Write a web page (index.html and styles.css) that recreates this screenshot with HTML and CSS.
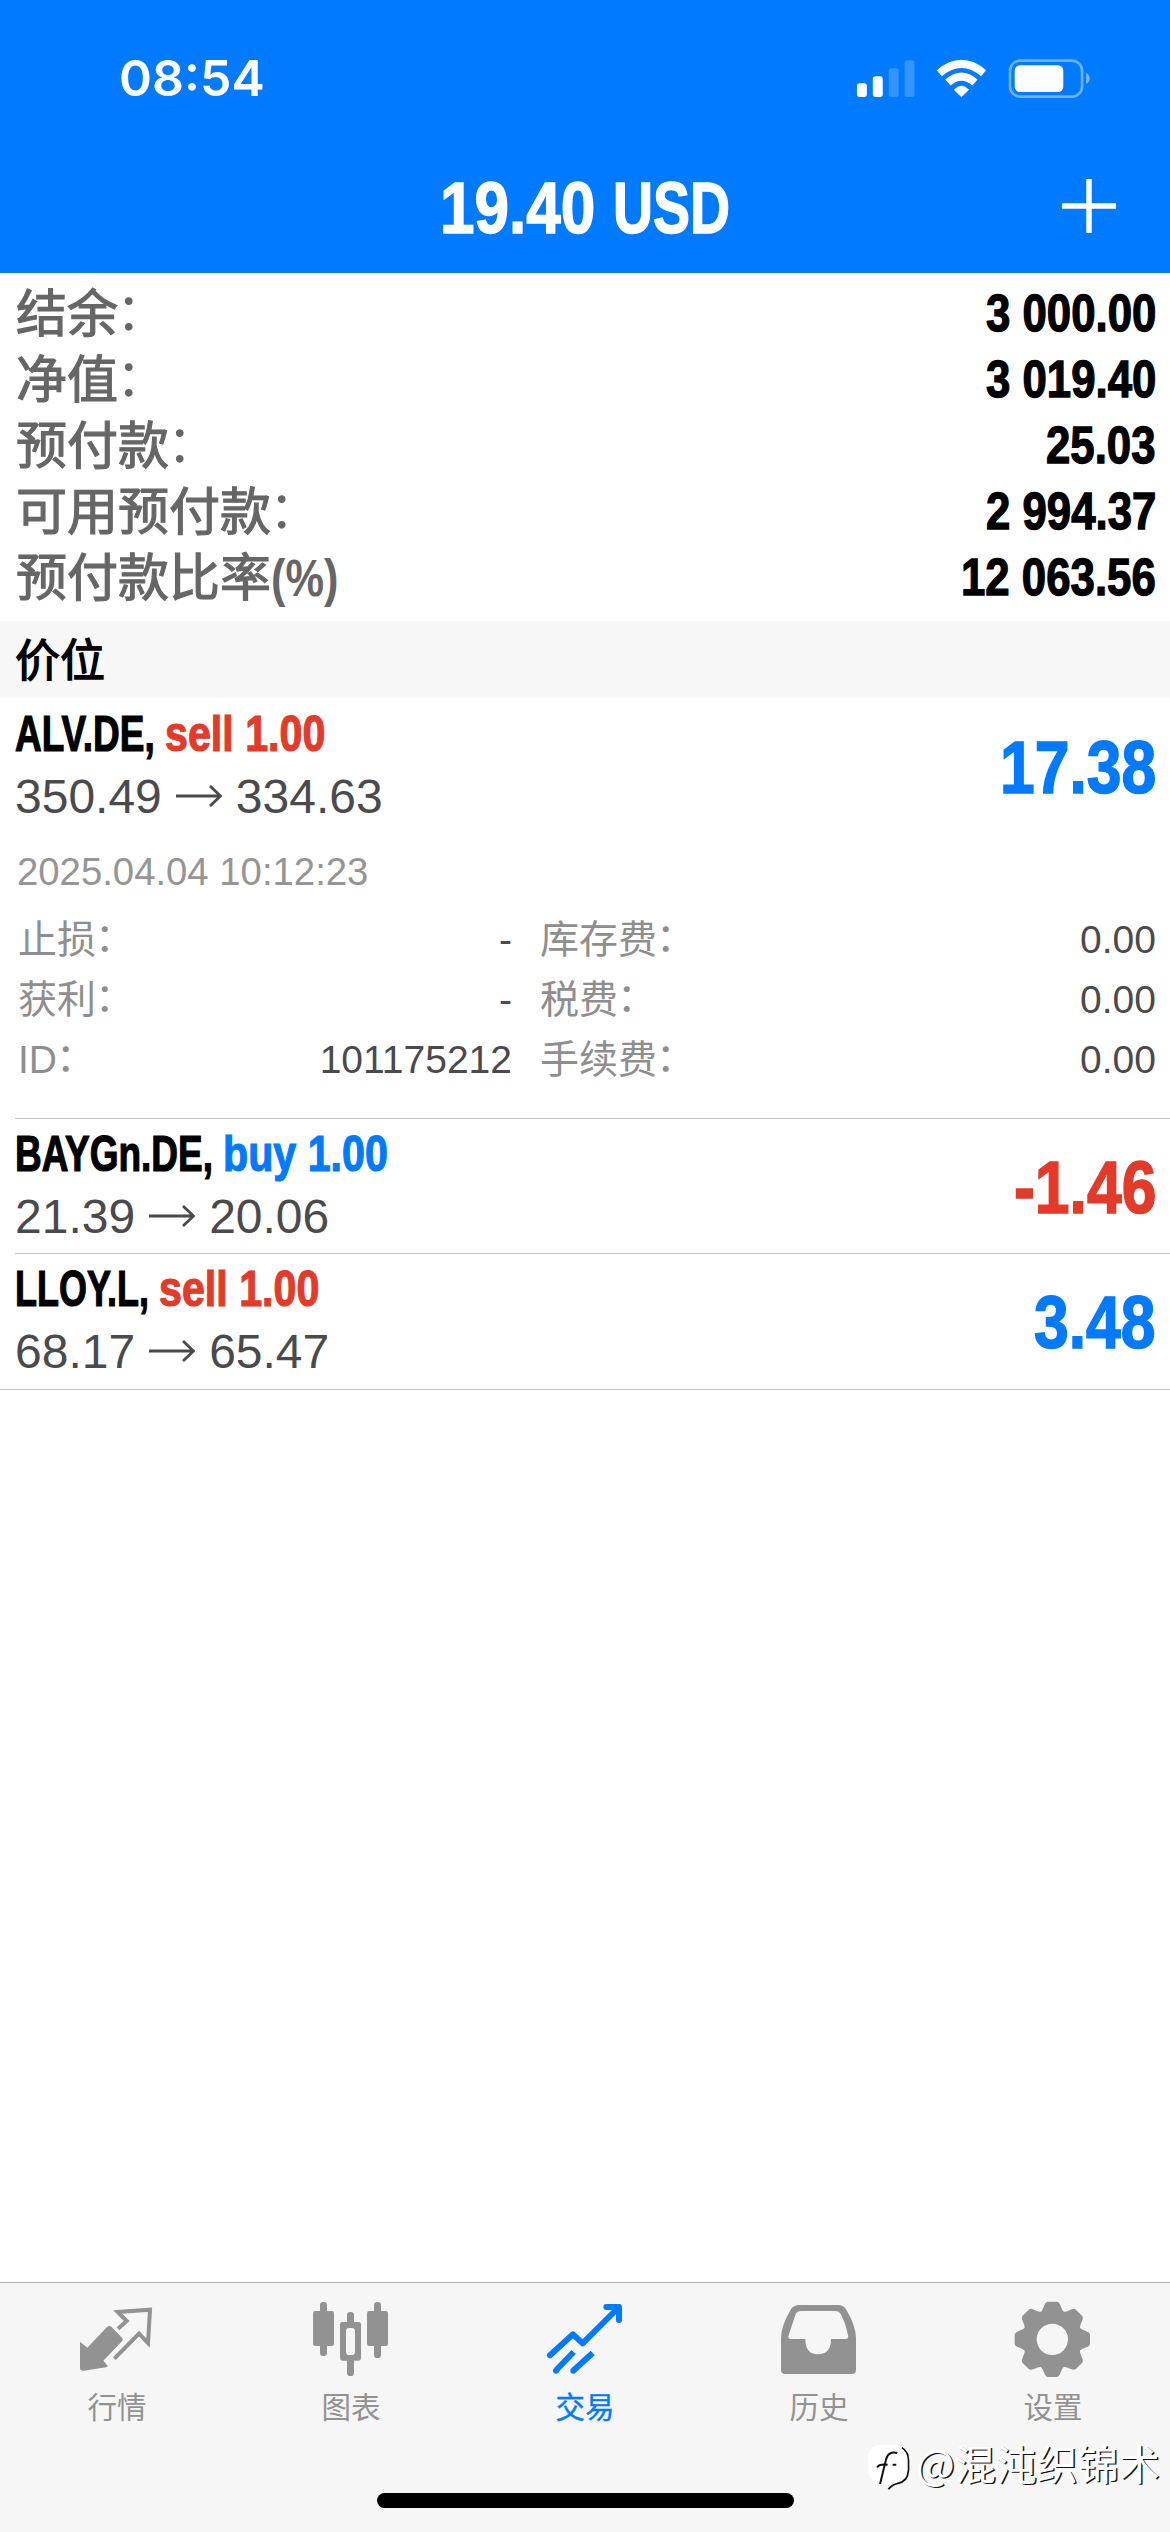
FILE: index.html
```
<!DOCTYPE html>
<html lang="zh-CN">
<head>
<meta charset="utf-8">
<title>交易</title>
<link rel="stylesheet" href="styles.css">
</head>
<body>
<div class="app">
  <header class="header">
    <div class="status">
      <span class="time">08:54</span>
      <svg class="status-icons" viewBox="48 50 708 124">
        <g fill="#fff">
          <rect x="48" y="126" width="30" height="42" rx="8"/>
          <rect x="96" y="105" width="30" height="63" rx="8"/>
          <rect x="144" y="81" width="30" height="87" rx="8" opacity=".2"/>
          <rect x="192" y="57" width="30" height="111" rx="8" opacity=".2"/>
          <path d="M364 167L342 146Q364 124 386 146Z" stroke="#fff" stroke-width="2" stroke-linejoin="round"/>
          <rect x="525" y="72" width="147" height="81" rx="16"/>
          <path d="M741 95Q752 101 752 112Q752 123 741 129Z" opacity=".45"/>
        </g>
        <g fill="none" stroke="#fff" stroke-width="24">
          <path d="M323 124Q364 88 405 124"/>
          <path d="M297 96Q364 40 431 96"/>
        </g>
        <rect x="511" y="58" width="218" height="109" rx="31" fill="none" stroke="#fff" stroke-width="8" opacity=".42"/>
      </svg>
    </div>
    <div class="nav">
      <h1 class="title"><span class="squeeze num">19.40</span><span class="squeeze usd">USD</span></h1>
      <svg class="plus" viewBox="0 0 54 54"><path d="M27 0V54M0 27H54" stroke="#fff" stroke-width="5.5"/></svg>
    </div>
  </header>

  <dl class="summary">
    <div><dt>结余<i>：</i></dt><dd><span class="squeeze num">3 000.00</span></dd></div>
    <div><dt>净值<i>：</i></dt><dd><span class="squeeze num">3 019.40</span></dd></div>
    <div><dt>预付款<i>：</i></dt><dd><span class="squeeze num">25.03</span></dd></div>
    <div><dt>可用预付款<i>：</i></dt><dd><span class="squeeze num">2 994.37</span></dd></div>
    <div><dt>预付款比率<span class="squeeze pct">(%)</span></dt><dd><span class="squeeze num">12 063.56</span></dd></div>
  </dl>

  <h2 class="band">价位</h2>

  <main class="positions">
    <section class="position">
      <div class="head">
        <div>
          <div class="name"><span class="squeeze sym">ALV.DE,</span><span class="squeeze side red">sell 1.00</span></div>
          <div class="price">350.49<svg class="arrow" viewBox="0 0 46 22"><path d="M0 11H44M34 1L44.500 11L34 21"/></svg>334.63</div>
        </div>
        <div class="profit blue"><span class="squeeze num">17.38</span></div>
      </div>
      <div class="date">2025.04.04 10:12:23</div>
      <div class="details">
        <span>止损<i>：</i></span><b>-</b><span>库存费<i>：</i></span><b>0.00</b>
        <span>获利<i>：</i></span><b>-</b><span>税费<i>：</i></span><b>0.00</b>
        <span>ID<i>：</i></span><b>101175212</b><span>手续费<i>：</i></span><b>0.00</b>
      </div>
    </section>
    <section class="position">
      <div class="head">
        <div>
          <div class="name"><span class="squeeze sym">BAYGn.DE,</span><span class="squeeze side blue">buy 1.00</span></div>
          <div class="price">21.39<svg class="arrow" viewBox="0 0 46 22"><path d="M0 11H44M34 1L44.500 11L34 21"/></svg>20.06</div>
        </div>
        <div class="profit red"><span class="squeeze num">-1.46</span></div>
      </div>
    </section>
    <section class="position">
      <div class="head">
        <div>
          <div class="name"><span class="squeeze sym tight">LLOY.L,</span><span class="squeeze side red">sell 1.00</span></div>
          <div class="price">68.17<svg class="arrow" viewBox="0 0 46 22"><path d="M0 11H44M34 1L44.500 11L34 21"/></svg>65.47</div>
        </div>
        <div class="profit blue"><span class="squeeze num">3.48</span></div>
      </div>
    </section>
  </main>

  <footer class="tabbar">
    <nav class="tabs">
      <a class="tab">
        <svg viewBox="231 90 240 240">
          <path d="M240 215L262 233L321 171Q328 165 335 171L366 203Q371 208 366 214L310 272L323 287Q323 291 318 292L252 302Q240 303 240 294Z" fill="currentColor"/>
          <path d="M354 176L380 153L353 126L450 119L444 219L417 191L343 266" fill="none" stroke="currentColor" stroke-width="12" stroke-linejoin="miter"/>
        </svg>
        行情
      </a>
      <a class="tab">
        <svg viewBox="933 90 240 240" fill="currentColor">
          <rect x="939" y="123" width="63" height="105" rx="7"/>
          <rect x="960" y="96" width="21" height="162" rx="10"/>
          <rect x="1041" y="126" width="21" height="50" rx="10"/>
          <rect x="1041" y="255" width="21" height="63" rx="10"/>
          <path d="M1040 174H1064V255H1040Z" fill="#f6f6f6"/>
          <path fill-rule="evenodd" d="M1027 156H1076Q1083 156 1083 163V265Q1083 272 1076 272H1027Q1020 272 1020 265V163Q1020 156 1027 156ZM1048 174Q1038 174 1038 184V245Q1038 255 1048 255H1055Q1065 255 1065 245V184Q1065 174 1055 174Z"/>
          <rect x="1101" y="123" width="63" height="105" rx="7"/>
          <rect x="1122" y="96" width="21" height="168" rx="10"/>
        </svg>
        图表
      </a>
      <a class="tab active">
        <svg viewBox="375 90 240 240" fill="none" stroke="currentColor" stroke-width="18" stroke-linejoin="round">
          <path d="M390 256L459 193L488 220L594 114M559 111H597V150" stroke-linecap="round"/>
          <path d="M409 300L461 246M462 300L518 249"/>
          <g fill="currentColor" stroke="none"><circle cx="408" cy="302" r="9"/><circle cx="460" cy="302" r="9"/></g>
        </svg>
        交易
      </a>
      <a class="tab">
        <svg viewBox="-48 90 240 240" fill="currentColor">
          <path fill-rule="evenodd" d="M14 105H128Q146 105 154 119Q183 168 183 205V299Q183 312 170 312H-29Q-42 312 -42 299V205Q-42 168 -13 119Q-5 105 14 105ZM19 123Q6 123 2 132L-19 196Q-23 207 -13 207H31Q31 253 69 253Q108 253 108 207H152Q162 207 159 196Q152 160 137 132Q132 123 121 123Z"/>
        </svg>
        历史
      </a>
      <a class="tab">
        <svg viewBox="-118 -118 240 240" fill="currentColor">
          <defs><path id="tooth" d="M-36 -80Q-29 -87 -24 -102Q-20 -113 -13 -113H13Q20 -113 24 -102Q29 -87 36 -80Z"/></defs>
          <circle r="68" fill="none" stroke="currentColor" stroke-width="42"/>
          <use href="#tooth"/>
          <use href="#tooth" transform="rotate(45)"/>
          <use href="#tooth" transform="rotate(90)"/>
          <use href="#tooth" transform="rotate(135)"/>
          <use href="#tooth" transform="rotate(180)"/>
          <use href="#tooth" transform="rotate(225)"/>
          <use href="#tooth" transform="rotate(270)"/>
          <use href="#tooth" transform="rotate(315)"/>
        </svg>
        设置
      </a>
    </nav>
    <div class="home"></div>
    <div class="credit">
      <svg viewBox="210 526 135 145">
        <path d="M255 532H300Q340 532 340 575V610Q338 645 305 651L278 664L285 652Q216 655 216 600V572Q218 532 255 532Z" fill="#fff"/>
        <path d="M318 540Q338 552 338 580V608Q336 642 306 648Q288 652 277 666" fill="none" stroke="#111" stroke-width="5"/>
        <path d="M304 556Q276 548 269 580L252 650M243 600Q250 588 275 592M290 592H301" fill="none" stroke="#111" stroke-width="6"/>
      </svg>
      <span>@混沌织锦术</span>
    </div>
  </footer>
</div>
<script src="squeeze.js"></script>
</body>
</html>
```
FILE: styles.css
```
* { box-sizing: border-box; }
body {
  margin: 0;
  background: #fff;
  color: #000;
  font-family: "Liberation Sans", "Noto Sans CJK SC", sans-serif;
}
i { font-style: normal; }
.app {
  width: 1170px;
  height: 2532px;
  display: flex;
  flex-direction: column;
  overflow: hidden;
}

/* Text narrowed horizontally; --k is the width factor */
.squeeze {
  display: inline-block;
  white-space: pre;
  transform-origin: 0 50%;
}
.num { --k: .85; }
.usd { --k: .76; margin-left: 17px; }
.sym { --k: .747; }
.sym.tight { --k: .727; }
.side { --k: .832; margin-left: 10px; }
.pct { --k: .85; font-weight: 700; -webkit-text-stroke: 0; }
.red { color: #e33a2a; }
.blue { color: #007aff; }

.header {
  height: 273px;
  background: #007aff;
  color: #fff;
}
.status {
  height: 139px;
  padding: 17px 78px 0 119px;
  display: flex;
  align-items: center;
  justify-content: space-between;
}
.time { font: 600 50px/60px Inter, sans-serif; }
.status-icons { width: 236px; height: 41px; }
.nav {
  height: 134px;
  padding: 0 54px;
  display: grid;
  grid-template-columns: 54px 1fr 54px;
  align-items: center;
}
.title {
  grid-column: 2;
  margin: 0;
  padding-top: 3px;
  display: flex;
  justify-content: center;
  font-size: 73px;
  line-height: 131px;
  -webkit-text-stroke: 1.5px;
}
.plus { width: 54px; height: 54px; }

.summary {
  margin: 0;
  height: 348px;
  padding: 7px 14px 0 16px;
}
.summary div {
  height: 66px;
  display: flex;
  justify-content: space-between;
  line-height: 66px;
}
.summary dt {
  padding-top: 2px;
  color: #666;
  font-size: 51px;
  -webkit-text-stroke: 1.2px;
}
.summary dt i { -webkit-text-stroke: 0; vertical-align: 2px; line-height: 1px; margin-left: -2px; }
.summary dd {
  margin: 0;
  font-size: 51.500px;
  font-weight: 700;
  -webkit-text-stroke: 1.3px;
}
.band {
  margin: 0;
  height: 77px;
  padding: 2px 15px 0;
  background: #f7f7f7;
  font-size: 45px;
  font-weight: 400;
  line-height: 77px;
  -webkit-text-stroke: 1.3px;
}

.positions {
  padding: 1px 0 0 15px;
}
.position { border-bottom: 1px solid #c6c6c8; }
.position:last-child { margin-left: -15px; padding-left: 15px; }
.head {
  height: 134px;
  padding-right: 14px;
  display: flex;
  justify-content: space-between;
}
.position:last-child .head { height: 135px; }
.name {
  padding-top: 2px;
  height: 67px;
  font-size: 49.500px;
  font-weight: 700;
  line-height: 66px;
  -webkit-text-stroke: 1.2px;
}
.price {
  height: 61px;
  color: #4a4a4c;
  font-size: 48px;
  line-height: 61px;
}
.arrow {
  width: 46px;
  height: 22px;
  margin: 0 14px 0 14px;
  vertical-align: 6px;
  fill: none;
  stroke: currentColor;
  stroke-width: 2.8;
}
.profit {
  padding-top: 2px;
  font-size: 73.500px;
  font-weight: 700;
  line-height: 134px;
  -webkit-text-stroke: 1.6px;
}
.date {
  margin-top: 9px;
  padding-left: 2px;
  color: #959595;
  font-size: 38.300px;
  line-height: 60px;
}
.details {
  padding: 8px 14px 28px 3px;
  display: grid;
  grid-template-columns: 160px 334px 200px 1fr;
  color: #8e8e8e;
  font-size: 39px;
  line-height: 60px;
}
.details span:nth-of-type(even) { margin-left: 28px; }
.details span { white-space: nowrap; }
.details i { vertical-align: 2px; line-height: 1px; margin-left: -1px; }
.details b {
  color: #4a4a4c;
  font-weight: 400;
  text-align: right;
}

.tabbar {
  position: relative;
  margin-top: auto;
  height: 250px;
  border-top: 1px solid #b0b0b2;
  background: #f6f6f6;
}
.tabs { display: flex; padding-top: 17px; }
.tab {
  flex: 1;
  display: flex;
  flex-direction: column;
  align-items: center;
  color: #929292;
  font-size: 29.500px;
  line-height: 55px;
}
.tab svg { width: 80px; height: 80px; }
.tab.active { color: #007aff; -webkit-text-stroke: .4px; }
.home {
  width: 417px;
  height: 15px;
  margin: 58px auto 0;
  border-radius: 8px;
  background: #000;
}
.credit {
  position: absolute;
  left: 866px;
  top: 154px;
  display: flex;
  align-items: center;
  gap: 5px;
  color: #fff;
  font: 41px/50px "Noto Sans CJK SC", sans-serif;
  text-shadow: 1.500px 1px 0 #111;
  white-space: nowrap;
}
.credit span { margin-top: -4px; }
.credit svg { width: 45px; height: 48px; margin-top: 6px; }
```
FILE: squeeze.js
```
// Narrow each .squeeze element and take up the width it no longer needs.
document.querySelectorAll('.squeeze').forEach(function (el) {
  var k = parseFloat(getComputedStyle(el).getPropertyValue('--k'));
  var width = el.getBoundingClientRect().width;
  el.style.marginRight = (k - 1) * width + 'px';
  el.style.transform = 'scaleX(' + k + ')';
});
```
